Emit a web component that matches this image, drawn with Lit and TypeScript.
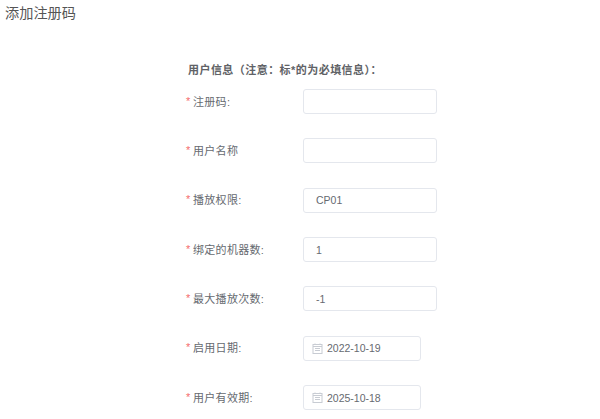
import { LitElement, html, css } from "lit";
import { customElement } from "lit/decorators.js";

const rows = [
  { label: "注册码:", value: "" },
  { label: "用户名称", value: "" },
  { label: "播放权限:", value: "CP01" },
  { label: "绑定的机器数:", value: "1" },
  { label: "最大播放次数:", value: "-1" },
  { label: "启用日期:", value: "2022-10-19", date: true },
  { label: "用户有效期:", value: "2025-10-18", date: true },
];

@customElement("app-root")
export class AppRoot extends LitElement {
  static styles = css`
    :host {
      display: block;
      width: 600px;
      height: 419px;
      overflow: hidden;
      background: #fff;
      font-family: "Liberation Sans", "Noto Sans CJK SC", sans-serif;
      color: #666a70;
    }
    .title {
      font-size: 14.2px;
      line-height: 20px;
      padding: 3px 0 0 5px;
      color: #555;
    }
    .form {
      margin: 40px 0 0 185px;
      display: flex;
      flex-direction: column;
    }
    .heading {
      font-size: 11px;
      line-height: 14px;
      font-weight: 700;
      color: #606266;
      padding-left: 3px;
      margin-bottom: 12.1px;
      letter-spacing: 0.45px;
    }
    .row {
      display: flex;
      align-items: center;
      height: 25px;
      margin-bottom: 24.33px;
    }
    .label {
      width: 118px;
      font-size: 11px;
      letter-spacing: 0.3px;
      margin-bottom: 2px;
      display: flex;
      align-items: center;
    }
    .star {
      color: #f56c6c;
      width: 8px;
      padding-left: 1px;
      box-sizing: border-box;
    }
    .input {
      box-sizing: border-box;
      width: 134px;
      height: 25px;
      border: 1px solid #e4e7ed;
      border-radius: 3px;
      padding-left: 12px;
      font-size: 10.5px;
      display: flex;
      align-items: center;
      gap: 4px;
    }
    .input.date {
      width: 118px;
      padding-left: 8px;
    }
    svg {
      width: 11px;
      height: 11px;
      flex: none;
    }
  `;

  private icon() {
    return html`<svg viewBox="0 0 11 11" fill="none" stroke="#c8ccd3" stroke-width="1">
      <rect x="1" y="1.5" width="9" height="9"></rect>
      <path d="M1 3.5H10M3 5.5H8M3 7.5H8M3 .5V2M8 .5V2"></path>
    </svg>`;
  }

  render() {
    return html`
      <div class="title">添加注册码</div>
      <div class="form">
        <div class="heading">用户信息（注意：标*的为必填信息）：</div>
        ${rows.map(
          (r) => html`<div class="row">
            <div class="label"><span class="star">*</span>${r.label}</div>
            <div class="input ${r.date ? "date" : ""}">
              ${r.date ? this.icon() : ""}<span>${r.value}</span>
            </div>
          </div>`
        )}
      </div>
    `;
  }
}
